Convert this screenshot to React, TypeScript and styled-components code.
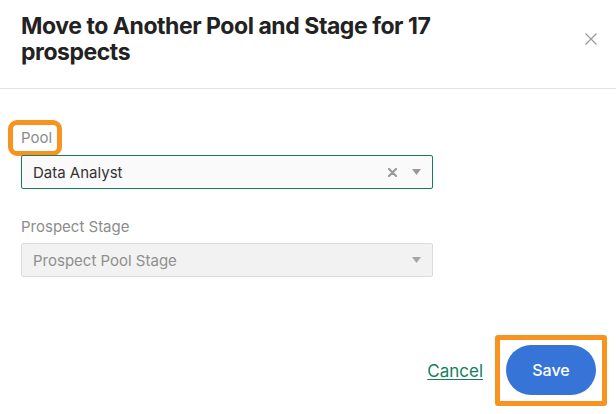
import React from "react";
import styled, { createGlobalStyle } from "styled-components";

const Global = createGlobalStyle`
  html, body { margin: 0; padding: 0; background: #ffffff; }
  body { font-family: "Inter", "Liberation Sans", Arial, sans-serif; -webkit-font-smoothing: antialiased; }
  * { box-sizing: border-box; }
`;

const Dialog = styled.div`
  width: 616px;
  height: 414px;
  display: flex;
  flex-direction: column;
  background: #fff;
`;

const Header = styled.div`
  display: flex;
  align-items: flex-start;
  justify-content: space-between;
  padding: 13px 19px 23px 21px;
  border-bottom: 1px solid #e3e3e3;
`;

const Title = styled.h1`
  margin: 0;
  max-width: 440px;
  font-size: 23px;
  line-height: 26px;
  font-weight: 700;
  color: #222222;
  letter-spacing: -0.45px;
`;

const CloseButton = styled.button`
  border: 0;
  background: none;
  padding: 0;
  margin-top: 20px;
  width: 12px;
  height: 12px;
  display: flex;
  cursor: pointer;
`;

const Body = styled.div`
  display: flex;
  flex-direction: column;
  padding: 39px 183px 0 21px;
`;

const Field = styled.div<{ $gap?: number }>`
  display: flex;
  flex-direction: column;
  margin-bottom: ${(p) => p.$gap ?? 0}px;
`;

const Label = styled.label<{ $highlight?: boolean }>`
  align-self: flex-start;
  font-size: 15px;
  line-height: 20px;
  color: #8c8c8c;
  margin-bottom: 6px;
  ${(p) =>
    p.$highlight
      ? `
    margin-left: -5px;
    margin-bottom: 7px;
    padding: 0 2px 0 5px;
    border-radius: 1px;
    outline: 5px solid #f7931e;
    outline-offset: 3px;
  `
      : ""}
`;

const SelectBox = styled.div<{ $disabled?: boolean }>`
  height: 34px;
  display: flex;
  align-items: center;
  padding: 0 11px 0 11px;
  border: 1px solid ${(p) => (p.$disabled ? "#dcdcdc" : "#13805c")};
  border-radius: 2px;
  background: ${(p) => (p.$disabled ? "#f2f2f2" : "#fafafa")};
`;

const Value = styled.span<{ $muted?: boolean }>`
  flex: 1;
  font-size: 15px;
  color: ${(p) => (p.$muted ? "#8f8f8f" : "#333333")};
`;

const Icons = styled.span`
  display: flex;
  align-items: center;
  gap: 15px;
`;

const Footer = styled.div`
  margin-top: auto;
  display: flex;
  justify-content: flex-end;
  align-items: center;
  padding: 0 9px 8px 0;
`;

const CancelLink = styled.a`
  font-size: 17px;
  color: #13805c;
  text-decoration: underline;
  text-underline-offset: 2px;
  text-decoration-thickness: 1px;
  margin-right: 12px;
  cursor: pointer;
`;

const Highlight = styled.div`
  border: 5px solid #f7931e;
  border-radius: 3px;
  padding: 5px 6px 6px 6px;
  display: flex;
`;

const SaveButton = styled.button`
  width: 90px;
  height: 50px;
  border: 0;
  border-radius: 25px;
  background: #3674d8;
  color: #fff;
  font-family: inherit;
  font-size: 16px;
  font-weight: 500;
  cursor: pointer;
`;

const ClearIcon = () => (
  <svg width="9" height="9" viewBox="0 0 9 9">
    <path d="M1 1 L8 8 M8 1 L1 8" stroke="#9a9a9a" strokeWidth="2.2" strokeLinecap="round" />
  </svg>
);

const Caret = ({ color = "#9a9a9a" }: { color?: string }) => (
  <svg width="9" height="6" viewBox="0 0 9 6">
    <path d="M0 0 H9 L4.5 6 Z" fill={color} />
  </svg>
);

export default function App() {
  return (
    <>
      <Global />
      <Dialog>
        <Header>
          <Title>Move to Another Pool and Stage for 17 prospects</Title>
          <CloseButton aria-label="Close">
            <svg width="12" height="12" viewBox="0 0 12 12">
              <path d="M0.5 0.5 L11.5 11.5 M11.5 0.5 L0.5 11.5" stroke="#9b9b9b" strokeWidth="1.2" />
            </svg>
          </CloseButton>
        </Header>
        <Body>
          <Field $gap={28}>
            <Label $highlight>Pool</Label>
            <SelectBox>
              <Value>Data Analyst</Value>
              <Icons>
                <ClearIcon />
                <Caret />
              </Icons>
            </SelectBox>
          </Field>
          <Field>
            <Label>Prospect Stage</Label>
            <SelectBox $disabled>
              <Value $muted>Prospect Pool Stage</Value>
              <Icons>
                <Caret color="#a6a6a6" />
              </Icons>
            </SelectBox>
          </Field>
        </Body>
        <Footer>
          <CancelLink>Cancel</CancelLink>
          <Highlight>
            <SaveButton>Save</SaveButton>
          </Highlight>
        </Footer>
      </Dialog>
    </>
  );
}
